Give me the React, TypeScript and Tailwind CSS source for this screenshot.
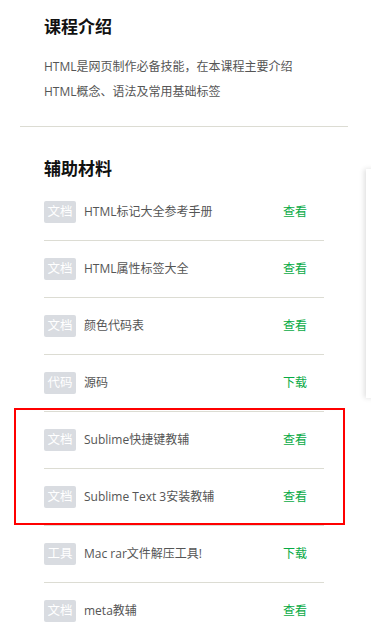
import React from "react";

const rows = [
  { tag: "文档", title: "HTML标记大全参考手册", action: "查看" },
  { tag: "文档", title: "HTML属性标签大全", action: "查看" },
  { tag: "文档", title: "颜色代码表", action: "查看" },
  { tag: "代码", title: "源码", action: "下载" },
  { tag: "文档", title: "Sublime快捷键教辅", action: "查看" },
  { tag: "文档", title: "Sublime Text 3安装教辅", action: "查看" },
  { tag: "工具", title: "Mac rar文件解压工具!", action: "下载" },
  { tag: "文档", title: "meta教辅", action: "查看" },
];

export default function App() {
  return (
    <div
      className="relative w-[371px] h-[628px] overflow-hidden bg-white"
      style={{ fontFamily: '"Open Sans", "Noto Sans CJK SC", sans-serif' }}
    >
      <div className="ml-[20px] w-[328px]">
        <div className="px-[24px] pt-[15px] pb-[22px]">
          <h2 className="text-[17px] leading-[24px] font-bold text-[#111]">课程介绍</h2>
          <div className="mt-[15px] text-[12px] leading-[25px] text-[#555]">
            <p>HTML是网页制作必备技能，在本课程主要介绍</p>
            <p>HTML概念、语法及常用基础标签</p>
          </div>
        </div>
        <div className="h-px bg-[#dcdcd3]" />
      </div>
      <div className="ml-[44px] w-[280px]">
        <h2 className="mt-[30px] text-[17px] leading-[24px] font-bold text-[#111]">辅助材料</h2>
        <div className="mt-[3px]">
          {rows.map((r, i) => (
            <div
              key={i}
              className="flex items-center justify-between py-[17px] border-b border-[#dcdcd3] pr-[17px]"
            >
              <div className="flex items-center">
                <span className="w-[32px] h-[22px] rounded-[2px] bg-[#d9dce1] text-white text-[12.5px] leading-[22px] text-center">
                  {r.tag}
                </span>
                <span className="ml-[8px] text-[12px] text-[#555]">{r.title}</span>
              </div>
              <span className="text-[12px] text-[#08aa45]">{r.action}</span>
            </div>
          ))}
        </div>
      </div>
      <div className="absolute left-[14px] top-[408px] w-[331px] h-[117px] border-2 border-[#ff0000]" />
      <div className="absolute left-[366px] top-[169px] w-[20px] h-[229px] bg-white shadow-[-2px_0_5px_rgba(0,0,0,0.12)]" />
    </div>
  );
}
